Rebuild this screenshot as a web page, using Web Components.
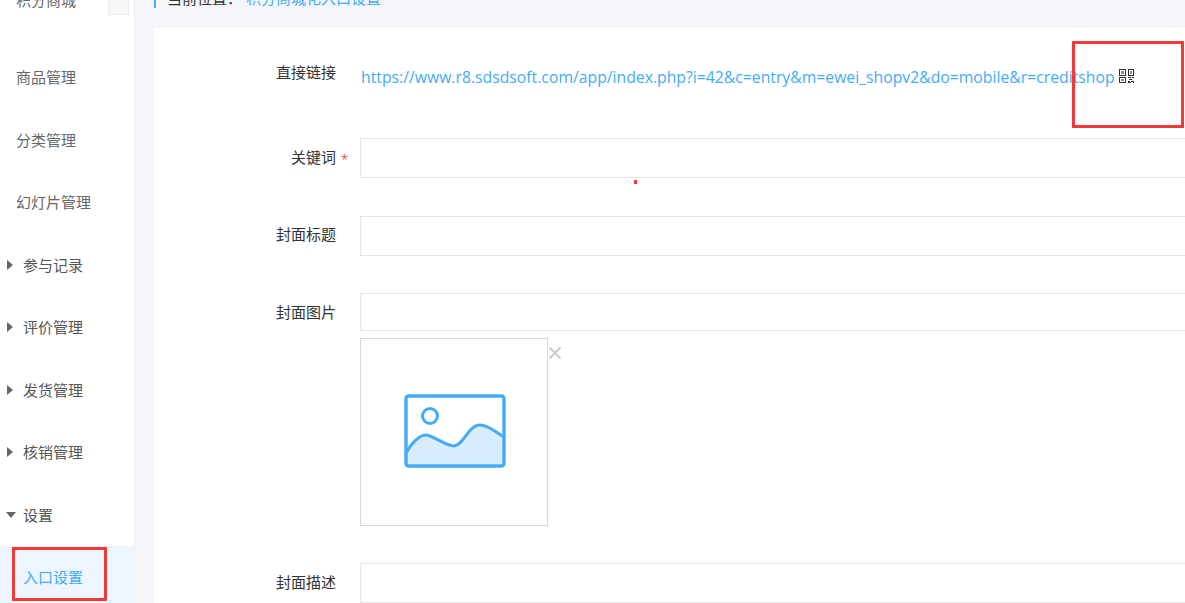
<!DOCTYPE html>
<html lang="zh">
<head>
<meta charset="utf-8">
<title>入口设置</title>
<style>
html, body { margin: 0; height: 603px; overflow: hidden; background: #f4f6f9; }
body { font: 15px/20px "Open Sans", "Noto Sans CJK SC", sans-serif; color: #333; }
</style>
</head>
<body>
<shop-page>
  <side-nav slot="nav">
    <nav-item top>积分商城</nav-item>
    <nav-item>商品管理</nav-item>
    <nav-item>分类管理</nav-item>
    <nav-item>幻灯片管理</nav-item>
    <nav-item arrow="right">参与记录</nav-item>
    <nav-item arrow="right">评价管理</nav-item>
    <nav-item arrow="right">发货管理</nav-item>
    <nav-item arrow="right">核销管理</nav-item>
    <nav-item arrow="down">设置</nav-item>
    <nav-item active>入口设置</nav-item>
  </side-nav>
  <bread-crumb slot="crumb" label="当前位置：">积分商城化入口设置</bread-crumb>
  <form-row label="直接链接">
    <link-copy>https://www.r8.sdsdsoft.com/app/index.php?i=42&amp;c=entry&amp;m=ewei_shopv2&amp;do=mobile&amp;r=creditshop</link-copy>
  </form-row>
  <form-row label="关键词" required style="margin-top:36px"><text-box></text-box></form-row>
  <form-row label="封面标题" style="margin-top:38px;--label-h:36px"><text-box></text-box></form-row>
  <form-row label="封面图片" style="margin-top:37px">
    <text-box h="38"></text-box>
    <image-pick></image-pick>
  </form-row>
  <form-row label="封面描述" style="margin-top:37px"><text-box></text-box></form-row>
</shop-page>
<mark-box style="left:1072px;top:41px;width:112px;height:87px"></mark-box>
<mark-box style="left:12px;top:547px;width:95px;height:54px"></mark-box>
<mark-box dot style="left:634px;top:180px;width:3px;height:4px"></mark-box>

<script>
class ShopPage extends HTMLElement {
    constructor() {
        super();
        this.attachShadow({mode: "open"}).innerHTML = `
        <style>
        :host { display: flex; height: 603px; overflow: hidden; }
        .nav { flex: 0 0 134px; background: #fff; border-right: 1px solid #eef0f3; }
        .main { flex: 1; min-width: 0; padding-left: 19px; }
        .card { background: #fff; height: 575px; overflow: hidden; padding-top: 25px; box-sizing: border-box; }
        </style>
        <div class="nav"><slot name="nav"></slot></div>
        <div class="main">
            <slot name="crumb"></slot>
            <div class="card"><slot></slot></div>
        </div>`;
    }
}
customElements.define("shop-page", ShopPage);

class SideNav extends HTMLElement {
    constructor() {
        super();
        this.attachShadow({mode: "open"}).innerHTML = `
        <style>
        :host { display: block; margin-top: -15px; }
        </style>
        <slot></slot>`;
    }
}
customElements.define("side-nav", SideNav);

class NavItem extends HTMLElement {
    constructor() {
        super();
        const arrow = this.getAttribute("arrow");
        const glyph = arrow === "right"
            ? `<svg width="6" height="10" viewBox="0 0 6 10"><path d="M0 0L6 5L0 10Z" fill="#666"/></svg>`
            : arrow === "down"
            ? `<svg width="10" height="6" viewBox="0 0 10 6"><path d="M0 0H10L5 6Z" fill="#666"/></svg>`
            : "";
        this.attachShadow({mode: "open"}).innerHTML = `
        <style>
        :host { display: flex; align-items: center; height: 62.5px; color: #666; padding-left: 16px; }
        :host([arrow]) { padding-left: 7px; color: #555; }
        :host([arrow="down"]) { padding-left: 6px; }
        :host([active]) { padding-left: 23px; color: #44abf7; background: #edf5fe; }
        :host([top]) { height: 30px; margin-bottom: 31px; position: relative; }
        .arrow { display: flex; width: 16px; flex: none; }
        :host([arrow="down"]) .arrow { width: 17px; }
        .tab { position: absolute; left: 108px; top: 0; width: 21px; height: 30px; box-sizing: border-box; background: #f7f7f7; border: 1px solid #eee; }
        </style>
        ${arrow ? `<span class="arrow">${glyph}</span>` : ""}
        <slot></slot>
        ${this.hasAttribute("top") ? `<span class="tab"></span>` : ""}`;
    }
}
customElements.define("nav-item", NavItem);

class BreadCrumb extends HTMLElement {
    constructor() {
        super();
        this.attachShadow({mode: "open"}).innerHTML = `
        <style>
        :host { display: block; height: 28px; overflow: hidden; color: #333; }
        .line { display: flex; align-items: center; margin-top: -12px; height: 20px; border-left: 2px solid #44abf7; padding-left: 11px; }
        .here { color: #44abf7; margin-left: 4px; }
        </style>
        <div class="line"><span>${this.getAttribute("label")}</span><span class="here"><slot></slot></span></div>`;
    }
}
customElements.define("bread-crumb", BreadCrumb);

class FormRow extends HTMLElement {
    constructor() {
        super();
        const star = this.hasAttribute("required") ? `<i>*</i>` : "";
        this.attachShadow({mode: "open"}).innerHTML = `
        <style>
        :host { display: grid; grid-template-columns: 182px 1fr; column-gap: 24px; color: #333; }
        .label { position: relative; text-align: right; line-height: var(--label-h, 38px); height: var(--label-h, 38px); }
        i { position: absolute; left: 187px; top: 2px; color: #ef4f4f; font-style: normal; font-size: 13px; }
        .field { min-width: 0; }
        </style>
        <div class="label">${this.getAttribute("label")}${star}</div>
        <div class="field"><slot></slot></div>`;
    }
}
customElements.define("form-row", FormRow);

class LinkCopy extends HTMLElement {
    constructor() {
        super();
        this.attachShadow({mode: "open"}).innerHTML = `
        <style>
        :host { display: flex; align-items: center; height: 50px; margin-top: -1px; color: #44abf7; font-size: 15.75px; white-space: nowrap; padding-left: 1px; }
        svg { margin-left: 4px; flex: none; position: relative; top: -1px; }
        </style>
        <slot></slot>
        <svg width="16" height="15" viewBox="0 0 16 15" shape-rendering="crispEdges" fill="none" stroke="#2f2f2f">
            <rect x="0.5" y="0.5" width="6" height="6"/><rect x="2" y="2" width="3" height="3" fill="#8a8a8a" stroke="none"/>
            <rect x="9.5" y="0.5" width="5" height="6"/><rect x="11" y="2" width="2" height="3" fill="#8a8a8a" stroke="none"/>
            <rect x="0.5" y="8.5" width="6" height="5"/><rect x="2" y="10" width="3" height="2" fill="#8a8a8a" stroke="none"/>
            <path d="M9 8.5h3M13 8.5h2M10 10.5h3M9 12.5h2M12 12.5h3M9 13.5h3M14 13.5h1"/>
        </svg>`;
    }
}
customElements.define("link-copy", LinkCopy);

class TextBox extends HTMLElement {
    constructor() {
        super();
        const h = this.getAttribute("h") || 40;
        this.attachShadow({mode: "open"}).innerHTML = `
        <style>
        :host { display: block; }
        input { display: block; width: 100%; height: ${h}px; box-sizing: border-box; border: 1px solid #e5e6e7; border-right: 0; background: #fff; padding: 0 12px; outline: 0; margin: 0; }
        </style>
        <input type="text">`;
    }
}
customElements.define("text-box", TextBox);

class ImagePick extends HTMLElement {
    constructor() {
        super();
        this.attachShadow({mode: "open"}).innerHTML = `
        <style>
        :host { display: flex; align-items: flex-start; margin-top: 7px; }
        .thumb { width: 188px; height: 188px; box-sizing: border-box; border: 1px solid #d9d9d9; display: flex; align-items: center; justify-content: center; }
        .thumb svg { margin: 0 0 2px 2px; }
        svg.x { margin: 8px 0 0 0; }
        </style>
        <div class="thumb">
            <svg width="102" height="74" viewBox="0 0 102 74">
                <path d="M2 59C8 48 16 41 22 41C28 41 42 52 50 52C60 51 64 31 76 31C84 31 92 38 100 43V72H2Z" fill="#d8ecfc"/>
                <rect x="2" y="2" width="98" height="70" rx="2.5" fill="none" stroke="#44abf7" stroke-width="3.4"/>
                <path d="M2 59C8 48 16 41 22 41C28 41 42 52 50 52C60 51 64 31 76 31C84 31 92 38 100 43" fill="none" stroke="#44abf7" stroke-width="3"/>
                <circle cx="26" cy="22" r="7.5" fill="none" stroke="#44abf7" stroke-width="3"/>
            </svg>
        </div>
        <svg class="x" width="14" height="14" viewBox="0 0 14 14"><path d="M1.5 1.5L12.5 12.5M12.5 1.5L1.5 12.5" stroke="#ccc" stroke-width="2"/></svg>`;
    }
}
customElements.define("image-pick", ImagePick);

class MarkBox extends HTMLElement {
    constructor() {
        super();
        this.attachShadow({mode: "open"}).innerHTML = `
        <style>
        :host { position: absolute; box-sizing: border-box; border: 3px solid #f33a3a; }
        :host([dot]) { border: 0; background: #f33a3a; }
        </style>`;
    }
}
customElements.define("mark-box", MarkBox);
</script>
</body>
</html>
